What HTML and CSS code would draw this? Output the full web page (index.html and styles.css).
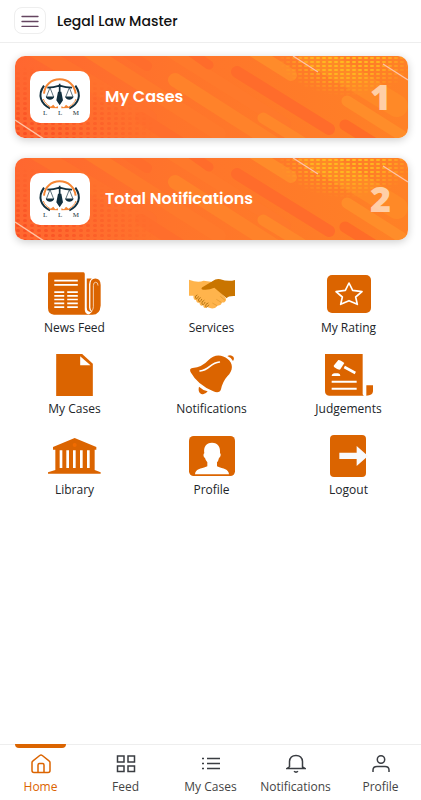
FILE: index.html
```html
<!DOCTYPE html>
<html lang="en">
<head>
    <meta charset="UTF-8">
    <meta name="viewport" content="width=device-width, initial-scale=1.0">
    <title>Legal Law Master</title>
    <link rel="stylesheet" href="styles.css">
</head>
<body>
    <!-- Shared drawings -->
    <svg class="defs" width="0" height="0" aria-hidden="true">
        <defs>
            <linearGradient id="cardFill" x1="0" y1="0" x2="1" y2="0">
                <stop offset="0" stop-color="#ff6730"/>
                <stop offset="0.4" stop-color="#ff742b"/>
                <stop offset="1" stop-color="#ff8126"/>
            </linearGradient>
            <pattern id="yellowDots" width="6" height="4" patternUnits="userSpaceOnUse">
                <rect x="1" y="1" width="4" height="2" rx="1" fill="#ffbc20"/>
            </pattern>
            <pattern id="redDots" width="7" height="5" patternUnits="userSpaceOnUse">
                <rect x="1" y="1" width="4" height="3" rx="1.5" fill="#f94d22"/>
            </pattern>
            <radialGradient id="fadeYellow" cx="0.5" cy="0" r="0.5" gradientTransform="scale(1 2)">
                <stop offset="0" stop-color="#fff"/>
                <stop offset="0.5" stop-color="#ddd"/>
                <stop offset="1" stop-color="#000"/>
            </radialGradient>
            <radialGradient id="fadeRed" cx="0" cy="1" r="1">
                <stop offset="0" stop-color="#fff"/>
                <stop offset="1" stop-color="#000"/>
            </radialGradient>
            <mask id="yellowMask"><rect x="262" y="0" width="140" height="40" fill="url(#fadeYellow)"/></mask>
            <mask id="redMask"><rect x="0" y="10" width="140" height="72" fill="url(#fadeRed)"/></mask>
        </defs>
        <symbol id="cardArt" viewBox="0 0 393 82" preserveAspectRatio="none">
            <rect width="393" height="82" fill="url(#cardFill)"/>
            <g fill="none" stroke-linecap="round">
                <path d="M20 -6 134 62" stroke="#ff712d" stroke-width="16"/>
                <path d="M66 -10 204 78" stroke="#ff792b" stroke-width="14"/>
                <path d="M98 -12 132 10" stroke="#ff6d2c" stroke-width="10"/>
                <path d="M126 62 170 90" stroke="#ff6e2c" stroke-width="12"/>
                <path d="M150 -8 270 68" stroke="#ff792b" stroke-width="12"/>
                <path d="M160 24 260 88" stroke="#ff822a" stroke-width="14"/>
                <path d="M170 -8 194 9" stroke="#ff6c2b" stroke-width="9"/>
                <path d="M222 16 314 73" stroke="#ff6c2b" stroke-width="12"/>
                <path d="M230 -10 276 19" stroke="#ff8b2a" stroke-width="12"/>
                <path d="M294 -4 382 50" stroke="#ff8927" stroke-width="22"/>
                <path d="M332 45 400 88" stroke="#ff8d2a" stroke-width="11"/>
                <path d="M248 62 300 94" stroke="#ff872a" stroke-width="11"/>
                <path d="M330 69 362 89" stroke="#ff6c28" stroke-width="11"/>
            </g>
            <rect x="262" width="131" height="40" fill="url(#yellowDots)" mask="url(#yellowMask)"/>
            <rect y="10" width="140" height="72" fill="url(#redDots)" mask="url(#redMask)"/>
            <path d="M278 0 303 16M368 8 393 24M0 64 29 83" fill="none" stroke="#ffc3a5" stroke-width="1.4"/>
        </symbol>
        <symbol id="logo" viewBox="0 0 180 132">
            <g fill="none">
                <path d="M42 44C22 72 32 98 60 112" stroke="#12303f" stroke-width="6"/>
                <path d="M136 44C156 72 146 98 118 112" stroke="#12303f" stroke-width="6"/>
                <path d="M42 68C44 42 64 25 89 25S134 42 137 68" stroke="#f58634" stroke-width="6"/>
                <path d="M40 84C44 95 50 101 62 108M138 84C134 95 128 101 116 108" stroke="#f58634" stroke-width="3"/>
                <path d="M52 50Q70 50 89 44 108 50 126 50M89 38V66" stroke="#12303f" stroke-width="5"/>
                <path d="M60 50 49 78H71ZM118 50 107 78H129Z" stroke="#12303f" stroke-width="2"/>
            </g>
            <path d="M47 77H73Q69 86 60 86T47 77ZM105 77H131Q127 86 118 86T105 77ZM84 62H94L99 88 89 103 79 88Z" fill="#12303f"/>
            <path d="M57 111 70 101 76 109 84 106V112ZM121 111 108 101 102 109 94 106V112Z" fill="#f58634"/>
        </symbol>
    </svg>

    <header class="topbar">
        <button class="menu-btn" type="button" aria-label="Open menu">
            <svg width="18" height="12" viewBox="0 0 18 12"><path d="M1 1.500H17M1 6.500H17M1 11.500H17" fill="none" stroke="#654560" stroke-width="1.300" stroke-linecap="round"/></svg>
        </button>
        <h1>Legal Law Master</h1>
    </header>

    <main>
        <section class="cards">
            <a class="card" href="#cases">
                <svg class="card-art" aria-hidden="true"><use href="#cardArt"/></svg>
                <span class="card-logo">
                    <svg width="60" height="44"><use href="#logo"/></svg>
                    <span class="logo-text"><span>L</span><span>L</span><span>M</span></span>
                </span>
                <span class="card-title">My Cases</span>
                <span class="card-count">1</span>
            </a>
            <a class="card" href="#notifications">
                <svg class="card-art" aria-hidden="true"><use href="#cardArt"/></svg>
                <span class="card-logo">
                    <svg width="60" height="44"><use href="#logo"/></svg>
                    <span class="logo-text"><span>L</span><span>L</span><span>M</span></span>
                </span>
                <span class="card-title">Total Notifications</span>
                <span class="card-count">2</span>
            </a>
        </section>

        <section class="tiles">
            <a class="tile" href="#news">
                <span class="tile-icon">
                    <svg width="53" height="44" viewBox="0 0 160 131">
                        <path d="M4 0H107Q111 0 111 5V112Q111 123 122 128H18Q0 126 0 108V5Q0 0 4 0Z" fill="#db6400"/>
                        <path d="M117 19H132Q124 26 124 36V106Q124 116 132 120 117 120 117 106Z" fill="#db6400"/>
                        <path d="M128 38Q128 19 143 19T159 38V100Q157 128 134 128H116Q126 128 134 118 128 114 128 106Z" fill="#db6400"/>
                        <path d="M151 40Q151 30 144 30T137 40V104Q137 112 132 117" fill="none" stroke="#fff" stroke-width="2"/>
                        <path d="M19 25H90M19 38H90M19 60H49M19 71H49M19 82H49M19 94H49M19 105H49M58 60H90M58 71H90M58 82H90M58 94H90M58 105H90" stroke="#fff" stroke-width="5"/>
                    </svg>
                </span>
                News Feed
            </a>
            <a class="tile" href="#services">
                <span class="tile-icon">
                    <svg width="46" height="30" viewBox="0 0 138 90">
                        <path d="M0 2Q26 12 44 5L66 8 104 50Q116 60 108 68 104 72 98 70 98 80 86 80 78 90 66 88 52 86 44 76L14 50H0Z" fill="#ffb44c"/>
                        <path d="M138 3Q118 9 94 1 82 -2 70 7L40 25Q34 31 42 32 60 34 76 26L113 58Q118 50 138 51Z" fill="#c97500"/>
                        <path d="M24 48Q17 50 20 57M34 55Q24 58 28 65M45 62Q35 66 38 74M56 70Q46 73 49 81" fill="none" stroke="#ffb44c" stroke-width="12" stroke-linecap="round"/>
                        <path d="M24 48Q17 50 20 57T28 53M34 56Q26 59 29 66T38 61M45 64Q36 68 39 75T48 70M57 72Q48 75 50 82T59 78" fill="none" stroke="#b87816" stroke-width="3" stroke-linecap="round"/>
                        <path d="M70 72 84 80M82 61 98 71M94 52 108 64" stroke="#dc962e" stroke-width="2"/>
                    </svg>
                </span>
                Services
            </a>
            <a class="tile" href="#rating">
                <span class="tile-icon">
                    <svg width="44" height="38" viewBox="0 0 132 114">
                        <rect width="132" height="114" rx="15" fill="#db6400"/>
                        <path d="M66 24 77 46 105 50 86 66 91 88 66 77 41 88 46 66 27 50 55 46Z" fill="none" stroke="#fff" stroke-width="5" stroke-linejoin="round"/>
                    </svg>
                </span>
                My Rating
            </a>
            <a class="tile" href="#my-cases">
                <span class="tile-icon">
                    <svg width="37" height="42" viewBox="0 0 110 126">
                        <path d="M0 0H78L110 29V126H0Z" fill="#db6400"/>
                        <path d="M72 7V34H103Z" fill="#fff"/>
                    </svg>
                </span>
                My Cases
            </a>
            <a class="tile" href="#alerts">
                <span class="tile-icon">
                    <svg width="44" height="40" viewBox="0 0 132 120">
                        <path d="M8 39Q36 37 55 16C72 -3 96 -2 113 12 132 27 128 48 112 64Q98 80 93 103C91 112 81 114 70 109Q22 88 3 53C-2 45 0 40 8 39Z" fill="#db6400"/>
                        <path d="M112 3Q122 -3 130 5 134 11 129 18 124 7 112 3ZM27 95Q39 106 53 109 46 120 34 117 23 112 27 95Z" fill="#db6400"/>
                        <path d="M30 48C58 46 61 23 88 21" fill="none" stroke="#fff" stroke-width="5" stroke-linecap="round"/>
                    </svg>
                </span>
                Notifications
            </a>
            <a class="tile" href="#judgements">
                <span class="tile-icon">
                    <svg width="48" height="42" viewBox="0 0 144 126">
                        <path d="M0 0H113V120Q113 125 118 125H12Q0 124 0 111ZM124 94H144V112Q143 125 124 125Z" fill="#db6400"/>
                        <path d="M20 66Q21 58 29 58H39Q46 59 46 66ZM20 80H95V86H20ZM20 101H95V107H20Z" fill="#fff"/>
                        <path d="M26 35 40 18Q45 17 58 27L46 46Q42 50 27 39Z" fill="#fff"/>
                        <path d="M58 39 91 57" stroke="#fff" stroke-width="8"/>
                    </svg>
                </span>
                Judgements
            </a>
            <a class="tile" href="#library">
                <span class="tile-icon">
                    <svg width="53" height="36" viewBox="0 0 159 108">
                        <path d="M80 0 145 27V35H140V96L158 103V107H0V103L22 96V35H15V27Z" fill="#db6400"/>
                        <path d="M35 37H43V90H35ZM55 37H63V90H55ZM75 37H83V90H75ZM96 37H104V90H96ZM117 37H125V90H117Z" fill="#fff"/>
                        <circle cx="80" cy="21" r="6" fill="#f06b00"/>
                    </svg>
                </span>
                Library
            </a>
            <a class="tile" href="#my-profile">
                <span class="tile-icon">
                    <svg width="46" height="40" viewBox="0 0 138 120">
                        <rect width="138" height="120" rx="14" fill="#db6400"/>
                        <path d="M69 20C87 20 95 33 93 52 97 54 95 64 90 66Q88 75 84 79V91C104 99 119 99 120 115H18C19 99 34 99 55 91V79Q50 74 48 66C43 64 42 54 46 52 43 33 51 20 69 20Z" fill="#fff"/>
                    </svg>
                </span>
                Profile
            </a>
            <a class="tile" href="#logout">
                <span class="tile-icon">
                    <svg width="38" height="42" viewBox="0 0 114 126">
                        <rect width="108" height="126" rx="12" fill="#db6400"/>
                        <path d="M28 53H80V33L114 63 80 93V72H28Z" fill="#f8f9fc"/>
                    </svg>
                </span>
                Logout
            </a>
        </section>
    </main>

    <nav class="bottom-nav">
        <a class="nav-item active" href="#home">
            <svg width="20" height="20" viewBox="0 0 20 20"><path d="M1 8.5Q1 7.5 2 6.8L8.7 1.5Q10 .6 11.3 1.5L18 6.8Q19 7.5 19 8.5V16.5Q19 18.5 17 18.5H3Q1 18.5 1 16.5ZM7 18V11Q7 9.5 8.5 9.5H11.5Q13 9.5 13 11V18"/></svg>
            Home
        </a>
        <a class="nav-item" href="#feed">
            <svg width="20" height="20" viewBox="0 0 20 20"><path d="M1.5 2H8V8H1.5ZM12 2H18.5V8H12ZM1.5 12H8V17.5H1.5ZM12 12H18.5V17.5H12Z"/></svg>
            Feed
        </a>
        <a class="nav-item" href="#list">
            <svg width="20" height="20" viewBox="0 0 20 20"><path d="M6 4.5H19M6 9.5H19M6 14.5H19M1 4.5H3M1 9.5H3M1 14.5H3"/></svg>
            My Cases
        </a>
        <a class="nav-item" href="#bell">
            <svg width="20" height="20" viewBox="0 0 20 20"><path d="M3.5 13V7.5Q4 1.5 10 1.5T16.5 7.5V13L19 14.5H1L3.5 13M8 17.2Q10 19 12 17.2"/></svg>
            Notifications
        </a>
        <a class="nav-item" href="#profile">
            <svg width="20" height="20" viewBox="0 0 20 20"><circle cx="10" cy="5.5" r="3.7"/><path d="M2 18V16Q2 12.5 6 12.5H14Q18 12.5 18 16V18"/></svg>
            Profile
        </a>
    </nav>
</body>
</html>
```

FILE: styles.css
```css
* {
    box-sizing: border-box;
}
body {
    margin: 0;
    min-height: 100vh;
    display: flex;
    flex-direction: column;
    overflow-x: hidden;
    background-color: #fff;
    color: #212529;
    font-family: "Open Sans", "Noto Sans", sans-serif;
    font-size: 12px;
    line-height: 18px;
}
a {
    color: inherit;
    text-decoration: none;
}
svg {
    display: block;
}
.defs {
    position: absolute;
}

/* Header */
.topbar {
    display: flex;
    align-items: center;
    gap: 11px;
    height: 43px;
    padding: 0 14px 1px;
    border-bottom: 1px solid #eee;
}
.topbar h1 {
    margin: 0;
    font-family: Poppins, Inter, sans-serif;
    font-size: 14px;
    font-weight: 500;
    color: #111;
}
.menu-btn {
    display: flex;
    align-items: center;
    justify-content: center;
    width: 32px;
    height: 27px;
    padding: 0;
    border: 1px solid #eee;
    border-radius: 8px;
    background-color: #fff;
}

/* Summary cards */
main {
    flex: 1;
}
.cards {
    display: flex;
    flex-direction: column;
    gap: 20px;
    padding: 13px 13px 0 15px;
}
.card {
    position: relative;
    display: flex;
    align-items: center;
    gap: 15px;
    padding: 15px 17px 15px 15px;
    border-radius: 10px;
    overflow: hidden;
    color: #fff;
    box-shadow: 0 2px 8px rgba(0, 0, 0, 0.2);
}
.card-art {
    position: absolute;
    inset: 0;
    width: 100%;
    height: 100%;
}
.card-logo,
.card-title,
.card-count {
    position: relative;
}
.card-logo {
    height: 52px;
    border-radius: 10px;
    background-color: #fff;
}
.logo-text {
    display: flex;
    justify-content: space-between;
    margin-top: -8px;
    padding: 0 11px 0 13px;
    font-family: "Liberation Serif", serif;
    font-size: 7px;
    line-height: 12px;
    color: #22343d;
}
.card-title {
    flex: 1;
    font-family: Poppins, Inter, sans-serif;
    font-size: 16px;
    font-weight: 600;
}
.card-count {
    font-size: 36px;
    line-height: 52px;
    font-weight: 800;
    color: rgba(255, 255, 255, 0.6);
}

/* Menu tiles */
.tiles {
    display: grid;
    grid-template-columns: repeat(3, 1fr);
    row-gap: 15px;
    padding: 31px 4px 31px 6px;
}
.tile {
    display: flex;
    flex-direction: column;
    align-items: center;
    gap: 2px;
}
.tile-icon {
    display: flex;
    align-items: center;
    height: 46px;
}

/* Bottom navigation */
.bottom-nav {
    display: flex;
    margin: 0 -2px;
    border-top: 1px solid #eee;
}
.nav-item {
    position: relative;
    flex: 1;
    display: flex;
    flex-direction: column;
    align-items: center;
    gap: 4px;
    padding: 9px 0 4px;
    color: #444;
}
.nav-item svg {
    fill: none;
    stroke: #3a3d42;
    stroke-width: 1.5;
}
.nav-item.active {
    color: #db6400;
}
.nav-item.active svg {
    stroke: #db6400;
}
.nav-item.active::before {
    content: "";
    position: absolute;
    top: -1px;
    width: 51px;
    height: 4px;
    border-radius: 0 0 4px 4px;
    background-color: #db6400;
}
```
